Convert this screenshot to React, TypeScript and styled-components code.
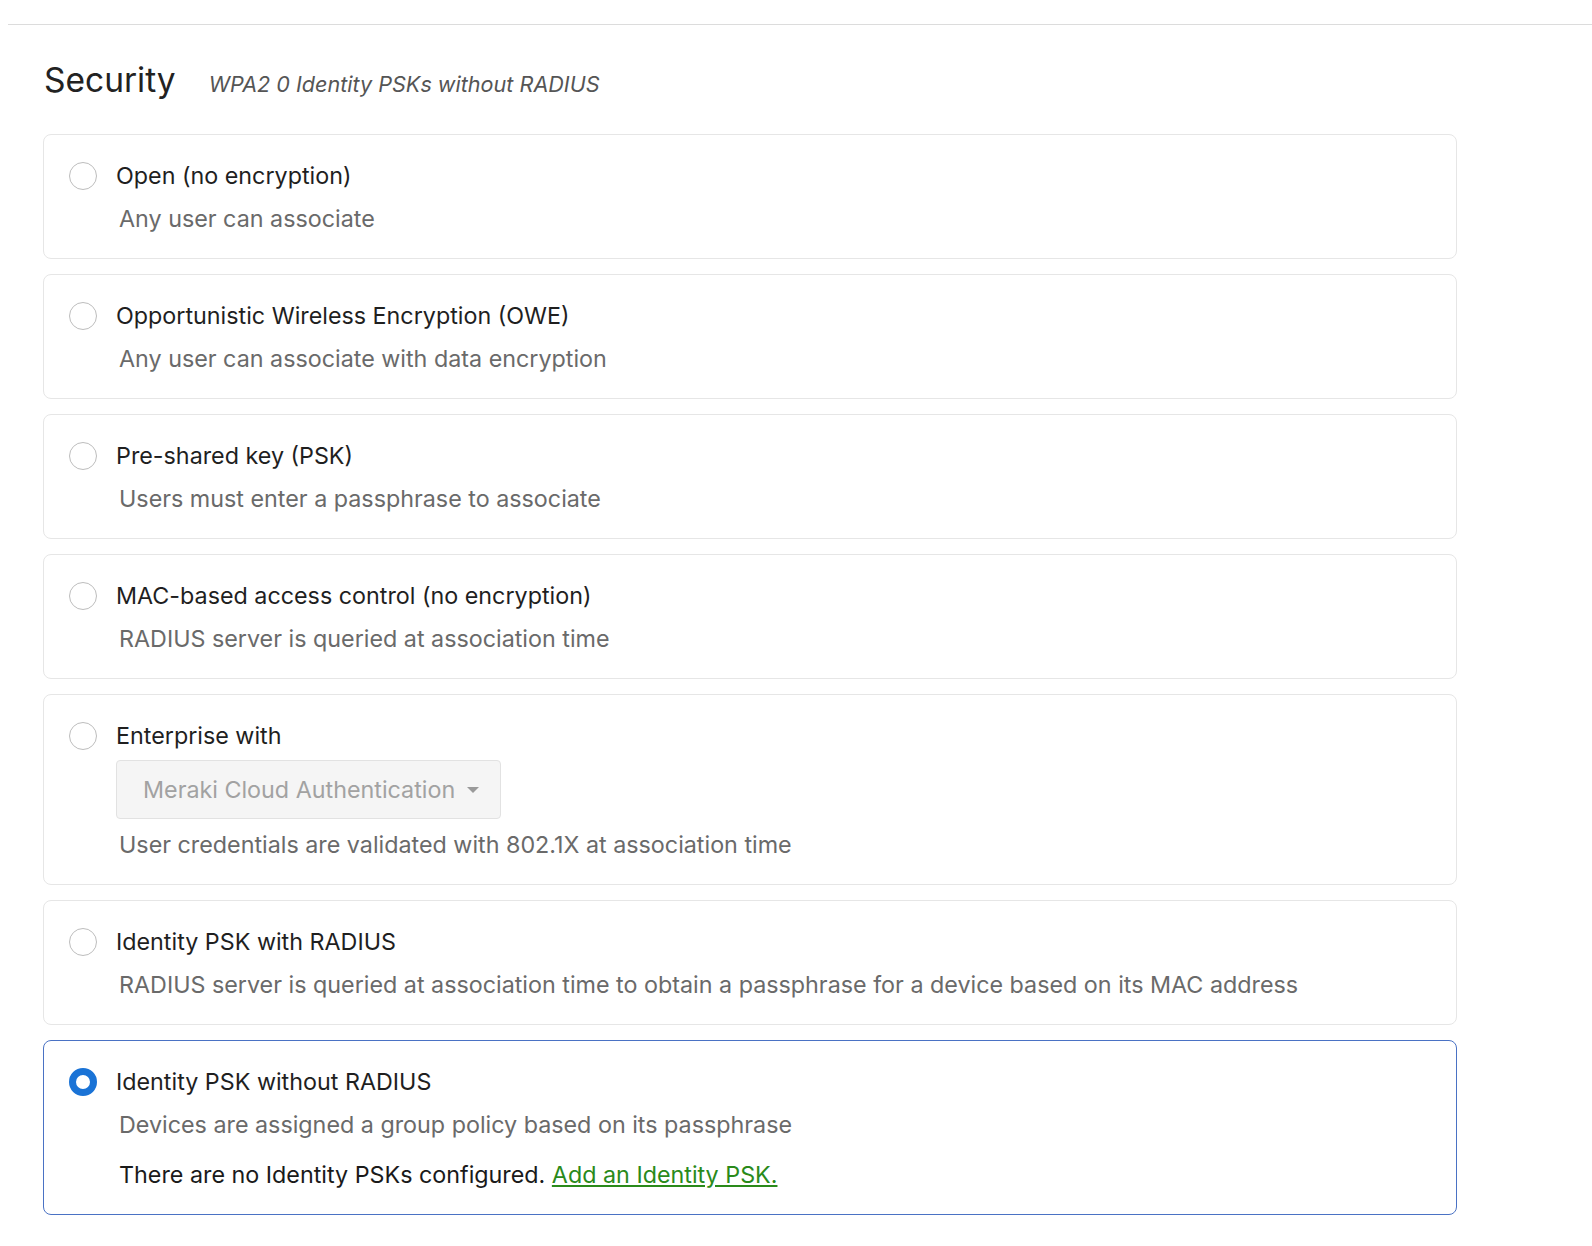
import styled, { createGlobalStyle } from "styled-components";

const GlobalStyle = createGlobalStyle`
  html, body {
    margin: 0;
    padding: 0;
    background: #fff;
  }
  body {
    font-family: Inter, "Noto Sans", "Liberation Sans", sans-serif;
    color: #222;
    overflow-x: hidden;
  }
`;

type Option = {
  id: string;
  title: string;
  description: string;
};

const options: Option[] = [
  { id: "open", title: "Open (no encryption)", description: "Any user can associate" },
  { id: "owe", title: "Opportunistic Wireless Encryption (OWE)", description: "Any user can associate with data encryption" },
  { id: "psk", title: "Pre-shared key (PSK)", description: "Users must enter a passphrase to associate" },
  { id: "mac", title: "MAC-based access control (no encryption)", description: "RADIUS server is queried at association time" },
  { id: "enterprise", title: "Enterprise with", description: "User credentials are validated with 802.1X at association time" },
  { id: "ipsk-radius", title: "Identity PSK with RADIUS", description: "RADIUS server is queried at association time to obtain a passphrase for a device based on its MAC address" },
  { id: "ipsk", title: "Identity PSK without RADIUS", description: "Devices are assigned a group policy based on its passphrase" },
];

export default function App() {
  const selected = "ipsk";

  return (
    <>
      <GlobalStyle />
      <Page>
        <Divider />
        <Section>
          <Header>
            <Title>Security</Title>
            <Summary>WPA2 0 Identity PSKs without RADIUS</Summary>
          </Header>
          <List>
            {options.map((opt) => (
              <Card key={opt.id} $active={opt.id === selected}>
                <Radio $checked={opt.id === selected} />
                <Body>
                  <Label>{opt.title}</Label>
                  {opt.id === "enterprise" && (
                    <Select>
                      Meraki Cloud Authentication
                      <Caret />
                    </Select>
                  )}
                  <Description>{opt.description}</Description>
                  {opt.id === "ipsk" && (
                    <Note>
                      There are no Identity PSKs configured. <NoteLink href="#">Add an Identity PSK.</NoteLink>
                    </Note>
                  )}
                </Body>
              </Card>
            ))}
          </List>
        </Section>
      </Page>
    </>
  );
}

const Page = styled.div`
  padding-top: 24px;
  padding-left: 8px;
  min-height: 1246px;
  box-sizing: border-box;
`;

const Divider = styled.div`
  height: 1px;
  background: #dcdcdc;
  margin-right: -8px;
`;

const Section = styled.div`
  padding-left: 35px;
  width: 1414px;
`;

const Header = styled.div`
  display: flex;
  align-items: baseline;
  gap: 33px;
  height: 109px;
  padding-top: 34px;
  box-sizing: border-box;
`;

const Title = styled.h2`
  margin: 0;
  font-size: 33.5px;
  font-weight: 400;
  color: #222;
  line-height: 42px;
  padding-left: 1px;
`;

const Summary = styled.span`
  font-size: 21.6px;
  font-style: italic;
  color: #555;
`;

const List = styled.div`
  display: flex;
  flex-direction: column;
  gap: 15px;
`;

const Card = styled.div<{ $active?: boolean }>`
  display: flex;
  align-items: flex-start;
  gap: 19px;
  padding: 27px 20px 25px 25px;
  border: 1px solid ${(p) => (p.$active ? "#4a72c4" : "#e6e6e6")};
  border-radius: 8px;
  background: #fff;
`;

const Radio = styled.span<{ $checked?: boolean }>`
  flex: none;
  width: 28px;
  height: 28px;
  box-sizing: border-box;
  border-radius: 50%;
  border: ${(p) => (p.$checked ? "7px solid #1a73d6" : "1px solid #bdbdbd")};
  background: #fff;
`;

const Body = styled.div`
  display: flex;
  flex-direction: column;
  align-items: flex-start;
`;

const Label = styled.div`
  font-size: 23.3px;
  line-height: 28px;
  color: #1f1f1f;
`;

const Description = styled.div`
  margin-top: 15px;
  padding-left: 3px;
  font-size: 23.3px;
  line-height: 28px;
  color: #6a6a6a;
`;

const Select = styled.div`
  margin-top: 10px;
  margin-bottom: -3px;
  display: flex;
  align-items: center;
  gap: 12px;
  width: 385px;
  height: 59px;
  flex: none;
  box-sizing: border-box;
  padding: 0 26px;
  background: #f5f5f5;
  border: 1px solid #e2e2e2;
  border-radius: 4px;
  font-size: 23.3px;
  color: #a2a2a2;
  white-space: nowrap;
`;

const Caret = styled.span`
  width: 0;
  height: 0;
  border-left: 6px solid transparent;
  border-right: 6px solid transparent;
  border-top: 6px solid #9a9a9a;
`;

const Note = styled.div`
  margin-top: 22px;
  padding-left: 3px;
  font-size: 23.3px;
  line-height: 28px;
  color: #1a1a1a;
`;

const NoteLink = styled.a`
  color: #2a8a1a;
  text-decoration: underline;
`;
